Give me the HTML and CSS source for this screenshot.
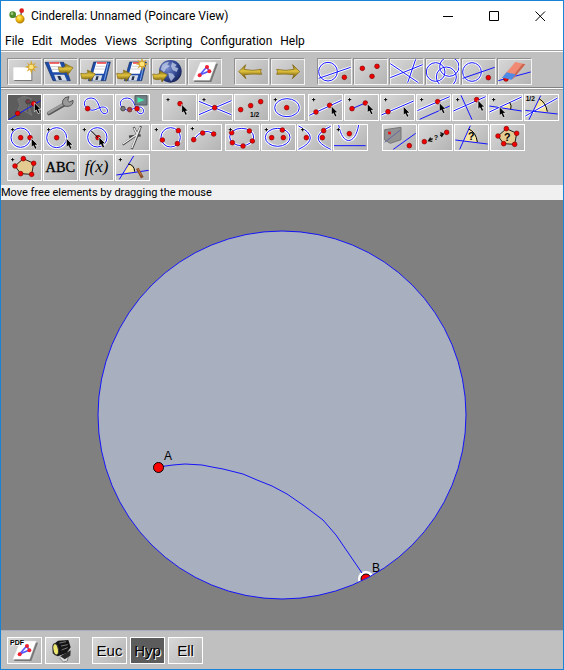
FILE: index.html
```html
<!DOCTYPE html>
<html lang="en">
<head>
<meta charset="utf-8">
<title>Cinderella: Unnamed (Poincare View)</title>
<link rel="stylesheet" href="styles.css">
</head>
<body>
<svg class="defs" aria-hidden="true">
  <defs>
    <radialGradient id="g-gold" cx=".4" cy=".35" r=".7"><stop offset="0" stop-color="#fff27a"/><stop offset=".5" stop-color="#f2bc10"/><stop offset="1" stop-color="#a87400"/></radialGradient>
    <linearGradient id="g-arrow" x1="0" y1="0" x2="0" y2="1"><stop offset="0" stop-color="#7a6410"/><stop offset=".45" stop-color="#e2c440"/><stop offset="1" stop-color="#5a4400"/></linearGradient>
    <radialGradient id="g-earth" cx=".35" cy=".35" r=".75"><stop offset="0" stop-color="#7c8fd0"/><stop offset=".6" stop-color="#2f458f"/><stop offset="1" stop-color="#141d50"/></radialGradient>
    <symbol id="dot" overflow="visible"><circle r="7" fill="#f00000" stroke="#850000" stroke-width="2"/></symbol>
    <symbol id="plus" overflow="visible"><path d="M-5 0H5M0-5V5" stroke="#fff" stroke-width="7"/><path d="M-5 0H5M0-5V5" stroke="#000" stroke-width="3"/></symbol>
    <symbol id="cursor" overflow="visible"><path d="M0 0V27L6 22L11 33L17 30L12 20H20Z" fill="#000" stroke="#f4f4f4" stroke-width="2"/></symbol>
    <symbol id="floppy" overflow="visible">
      <path d="M44 12H94L80 68H28Z" fill="#1c4ba8" stroke="#173063" stroke-width="2"/>
      <path d="M52 13H84L74 47H42Z" fill="#fff"/><path d="M54 15H82" stroke="#e22" stroke-width="4"/><path d="M51 25H79M48 33H77" stroke="#b9bdc8" stroke-width="2"/>
      <path d="M45 52H70L65 68H40Z" fill="#d7dde6"/><path d="M52 55H59L56 66H49Z" fill="#26334e"/><path d="M88 14L76 67" stroke="#7fa4e8" stroke-width="3"/>
    </symbol>
    <symbol id="gold-right" overflow="visible"><path d="M0 10Q12 14 22 8L20 0L44 12L28 34L26 25Q14 29 3 25Z" fill="url(#g-arrow)" stroke="#8a6c10" stroke-width="2"/></symbol>
    <symbol id="spark" overflow="visible"><path d="M0-20L4-7L14-14L8-3L21 0L8 4L14 14L4 8L0 21L-4 8L-14 14L-8 4L-20 0L-8-4L-14-14L-4-7Z" fill="#d5a62c"/><circle r="7" fill="#ffe47a"/></symbol>
    <symbol id="sheet" overflow="visible">
      <path d="M40 14H90L70 69H18Z" fill="#777" transform="translate(3 3)"/><path d="M40 12H88L68 67H17Z" fill="#fff" stroke="#ccc"/>
      <path d="M59 27L38 51L67 39Z" fill="none" stroke="#5557ff" stroke-width="5"/>
      <circle cx="60" cy="27" r="6" fill="#f02030"/><circle cx="38" cy="52" r="6" fill="#f02030"/><circle cx="67" cy="40" r="6" fill="#f02030"/>
    </symbol>
    <symbol id="loop" overflow="visible"><path d="M25 44C10 34 14 12 37 12C64 13 58 56 75 59C90 61 89 40 73 39C56 38 47 57 25 44Z" fill="none" stroke="#fff" stroke-width="7"/><path d="M25 44C10 34 14 12 37 12C64 13 58 56 75 59C90 61 89 40 73 39C56 38 47 57 25 44Z" fill="none" stroke="#1414ff" stroke-width="3"/></symbol>
    <symbol id="pentagon" overflow="visible"><path d="M49 14L80 28L74 61L41 59L24 36Z" fill="#e3cb92" stroke="#222" stroke-width="3"/><use href="#dot" x="49" y="14"/><use href="#dot" x="80" y="28"/><use href="#dot" x="74" y="61"/><use href="#dot" x="41" y="59"/><use href="#dot" x="24" y="36"/></symbol>
    <clipPath id="disk"><circle cx="281" cy="215" r="184"/></clipPath>
  </defs>
</svg>
<div class="window">
  <header class="titlebar">
    <svg class="logo" viewBox="0 0 48 48" aria-hidden="true"><path d="M11 20L34 34L38 8" fill="none" stroke="#777" stroke-width="5"/><circle cx="11" cy="20" r="10" fill="#4c8a2c"/><circle cx="9" cy="17" r="4" fill="#9cc878"/><circle cx="38" cy="8" r="7" fill="#e02020"/><circle cx="33" cy="33" r="13" fill="url(#g-gold)" stroke="#a87800"/></svg>
    <h1>Cinderella: Unnamed (Poincare View)</h1>
    <div class="controls">
      <button aria-label="Minimize"><svg viewBox="0 0 11 11"><path d="M0 5.500H10"/></svg></button>
      <button aria-label="Maximize"><svg viewBox="0 0 11 11"><path d="M.5.5H9.500V9.500H.5Z"/></svg></button>
      <button aria-label="Close"><svg viewBox="0 0 11 11"><path d="M.5.5L10 10M10 .5L.5 10"/></svg></button>
    </div>
  </header>
  <nav class="menu">
    <button>File</button><button>Edit</button><button>Modes</button><button>Views</button><button>Scripting</button><button>Configuration</button><button>Help</button>
  </nav>

  <div class="toolbar files">
    <div class="group">
      <button aria-label="New"><svg viewBox="3 3 99 75"><path d="M22 32H76V69H22Z" fill="#777"/><path d="M19 28H73V66H19Z" fill="#fff"/><use href="#spark" x="73" y="27"/></svg></button>
      <button aria-label="Open"><svg viewBox="3 3 99 75"><path d="M6 13H62L82 68H30Z" fill="#1c4ba8" stroke="#173063" stroke-width="2"/><path d="M17 13H50L62 43H29Z" fill="#fff"/><path d="M19 15H49" stroke="#e22" stroke-width="4"/><path d="M23 26H54M27 34H57" stroke="#aaa" stroke-width="2"/><path d="M33 50H64L72 68H40Z" fill="#d7dde6"/><path d="M43 54H52L57 66H48Z" fill="#26334e"/><use href="#gold-right" x="46" y="17"/></svg></button>
      <button aria-label="Save"><svg viewBox="3 3 99 75"><use href="#floppy"/><use href="#gold-right" x="5" y="36"/></svg></button>
      <button aria-label="Save as"><svg viewBox="3 3 99 75"><use href="#floppy"/><use href="#gold-right" x="5" y="36"/><use href="#spark" x="81" y="18"/></svg></button>
      <button aria-label="Export web page"><svg viewBox="3 3 99 75"><circle cx="58" cy="40" r="34" fill="url(#g-earth)"/><path d="M34 20Q44 10 54 12L49 20L57 24L45 32L39 43L29 34ZM63 13L77 20L72 27L82 31L77 42L65 36L60 25ZM52 44L66 47L72 56L60 70L54 58Z" fill="#cbd5ec" opacity=".7"/><use href="#gold-right" x="5" y="38"/></svg></button>
      <button aria-label="Export sheet"><svg viewBox="3 3 99 75"><use href="#sheet"/></svg></button>
    </div>
    <div class="group wide">
      <button aria-label="Undo"><svg viewBox="3 3 99 75"><path d="M14 41L35 20L31 34Q55 40 82 34L80 41L83 49Q55 47 31 50L36 62Z" fill="url(#g-arrow)" stroke="#806008" stroke-width="2"/></svg></button>
      <button aria-label="Redo"><svg viewBox="3 3 99 75"><path d="M89 41L68 20L72 34Q48 40 20 34L23 41L20 49Q48 47 72 50L67 62Z" fill="url(#g-arrow)" stroke="#806008" stroke-width="2"/></svg></button>
    </div>
    <div class="group wide">
      <button aria-label="Select all"><svg class="geo" viewBox="3 3 99 75"><g class="halo"><circle cx="33" cy="41" r="28"/><path d="M5 61L101 28"/></g><circle cx="33" cy="41" r="28"/><path d="M5 61L101 28"/><use href="#dot" x="82" y="58"/></svg></button>
      <button aria-label="Select points"><svg viewBox="3 3 99 75"><use href="#dot" x="28" y="31"/><use href="#dot" x="72" y="25"/><use href="#dot" x="57" y="55"/></svg></button>
      <button aria-label="Select lines"><svg class="geo" viewBox="3 3 99 75"><g class="halo"><path d="M4 17L88 74M4 59L101 20M56 74L80 4"/></g><path d="M4 17L88 74M4 59L101 20M56 74L80 4"/></svg></button>
      <button aria-label="Select circles"><svg class="geo" viewBox="3 3 99 75"><g class="halo"><circle cx="32" cy="42" r="28"/><circle cx="73" cy="26" r="29"/><circle cx="64" cy="57" r="30"/></g><circle cx="32" cy="42" r="28"/><circle cx="73" cy="26" r="29"/><circle cx="64" cy="57" r="30"/></svg></button>
      <button aria-label="Deselect"><svg class="geo" viewBox="3 3 99 75"><g class="halo"><circle cx="33" cy="42" r="28"/></g><circle cx="33" cy="42" r="28"/><path d="M5 61L101 28"/><use href="#dot" x="82" y="59"/></svg></button>
      <button aria-label="Delete"><svg class="geo" viewBox="3 3 99 75"><path d="M4 68L101 42"/><use href="#dot" x="27" y="63"/><path d="M21 52L55 12L85 19L47 64Z" style="fill:#f08a73;stroke:none"/><path d="M85 19L47 64L48 54L77 17Z" style="fill:#c86852;stroke:none"/><path d="M29 43L56 49L44 65L15 59Z" style="fill:#4f8ae6;stroke:none"/></svg></button>
    </div>
  </div>

  <div class="toolbar modes">
    <div class="row">
      <div class="group">
        <button class="active" aria-label="Move"><svg class="geo" viewBox="3 3 99 75"><path d="M32 15L50 7L73 14L63 32L75 64L46 48L26 60L39 34Z" style="fill:#6c6c6c;stroke:#777"/><path d="M62 15V55" style="stroke:#555"/><path d="M5 77L101 20"/><circle cx="63" cy="23" r="7" style="fill:#753a42;stroke:#444"/><use href="#dot" x="32" y="58"/><use href="#dot" x="80" y="29"/><use href="#cursor" x="82" y="26"/></svg></button>
        <button aria-label="Inspect"><svg viewBox="3 3 99 75"><path d="M18 58L65 31" stroke="#555" stroke-width="12" stroke-linecap="round"/><path d="M17 56L63 29" stroke="#999" stroke-width="8" stroke-linecap="round"/><path d="M59 20Q64 8 78 8L74 19L80 24L90 19Q92 34 76 37Q65 39 59 31Z" fill="#999" stroke="#555" stroke-width="3"/></svg></button>
        <button aria-label="Animate"><svg viewBox="3 3 99 75"><use href="#loop"/><use href="#dot" x="26" y="44"/></svg></button>
        <button aria-label="Record animation"><svg viewBox="3 3 99 75"><use href="#loop"/><path d="M60 5H96V33H60Z" fill="#708087" stroke="#4e5c61" stroke-width="3"/><path d="M67 10L89 18L68 26Z" fill="#3ef0ad"/><circle cx="24" cy="44" r="7" fill="#777" stroke="#333" stroke-width="2"/><circle cx="44" cy="47" r="7" fill="#aa3b3b" stroke="#622" stroke-width="2"/><use href="#dot" x="66" y="44"/></svg></button>
      </div>
      <div class="group wide">
        <button aria-label="Point"><svg viewBox="3 3 99 75"><use href="#plus" x="18" y="17"/><use href="#dot" x="54" y="29"/><use href="#cursor" x="59" y="31"/></svg></button>
        <button aria-label="Intersection"><svg class="geo" viewBox="3 3 99 75"><g class="halo"><path d="M3 22L100 62M3 62L100 20"/></g><path d="M3 22L100 62M3 62L100 20"/><use href="#plus" x="18" y="17"/><use href="#dot" x="50" y="41"/></svg></button>
        <button aria-label="Midpoint"><svg viewBox="3 3 99 75"><use href="#dot" x="20" y="47"/><use href="#dot" x="50" y="35"/><use href="#dot" x="80" y="23"/><text x="48" y="68" class="small">1/2</text></svg></button>
        <button aria-label="Center"><svg class="geo" viewBox="3 3 99 75"><g class="halo"><ellipse cx="51" cy="41" rx="37" ry="27"/></g><ellipse cx="51" cy="41" rx="37" ry="27"/><use href="#plus" x="16" y="17"/><use href="#dot" x="50" y="41"/></svg></button>
      </div>
      <div class="group near">
        <button aria-label="Line through two points"><svg class="geo" viewBox="3 3 99 75"><g class="halo"><path d="M4 64L101 19"/></g><path d="M4 64L101 19"/><use href="#plus" x="17" y="17"/><use href="#dot" x="24" y="54"/><use href="#dot" x="65" y="34"/><use href="#cursor" x="70" y="36"/></svg></button>
        <button aria-label="Segment"><svg class="geo" viewBox="3 3 99 75"><path d="M24 44L64 27"/><use href="#plus" x="17" y="17"/><use href="#dot" x="24" y="44"/><use href="#dot" x="64" y="27"/><use href="#cursor" x="70" y="29"/></svg></button>
        <button aria-label="Line through a point"><svg class="geo" viewBox="3 3 99 75"><g class="halo"><path d="M4 63L101 21"/></g><path d="M4 63L101 21"/><use href="#plus" x="17" y="17"/><use href="#dot" x="24" y="53"/><use href="#cursor" x="70" y="37"/></svg></button>
        <button aria-label="Parallel"><svg class="geo" viewBox="3 3 99 75"><g class="halo"><path d="M4 50L101 8"/></g><path d="M4 50L101 8M11 76L101 36"/><use href="#plus" x="17" y="17"/><use href="#dot" x="65" y="23"/><use href="#cursor" x="70" y="26"/></svg></button>
        <button aria-label="Perpendicular"><svg class="geo" viewBox="3 3 99 75"><g class="halo"><path d="M4 51L101 8"/></g><path d="M4 51L101 8M27 4L60 77"/><use href="#plus" x="17" y="17"/><use href="#dot" x="74" y="17"/><use href="#cursor" x="78" y="19"/></svg></button>
        <button aria-label="Line with fixed angle"><svg class="geo" viewBox="3 3 99 75"><path d="M33 40L67 25Q72 35 69 46Z" style="fill:#f5e4a2;stroke:none"/><g class="halo"><path d="M4 54L101 9"/></g><path d="M4 54L101 9M4 36L101 51"/><path d="M65 25Q72 35 68 46" class="black"/><use href="#plus" x="17" y="17"/><use href="#cursor" x="34" y="38"/></svg></button>
        <button aria-label="Angle bisector"><svg class="geo" viewBox="3 3 99 75"><path d="M29 50L47 12Q65 22 70 54Z" style="fill:#f5e4a2;stroke:none"/><g class="halo"><path d="M4 66L101 12"/></g><path d="M15 77L50 5M4 49L101 60M4 66L101 12"/><path d="M45 14Q65 25 70 53" class="black"/><text x="5" y="20" class="small">1/2</text></svg></button>
      </div>
    </div>
    <div class="row">
      <div class="group">
        <button aria-label="Circle"><svg class="geo" viewBox="3 3 99 75"><g class="halo"><circle cx="41" cy="41" r="29"/></g><circle cx="41" cy="41" r="29"/><use href="#plus" x="17" y="17"/><use href="#dot" x="41" y="41"/><use href="#dot" x="69" y="41"/><use href="#cursor" x="73" y="43"/></svg></button>
        <button aria-label="Circle by radius"><svg class="geo" viewBox="3 3 99 75"><g class="halo"><circle cx="41" cy="41" r="30"/></g><circle cx="41" cy="41" r="30"/><use href="#plus" x="17" y="17"/><use href="#dot" x="41" y="41"/><use href="#cursor" x="70" y="43"/></svg></button>
        <button aria-label="Circle with fixed radius"><svg class="geo" viewBox="3 3 99 75"><g class="halo"><circle cx="55" cy="40" r="29"/></g><circle cx="55" cy="40" r="29"/><use href="#plus" x="16" y="17"/><use href="#dot" x="57" y="41"/><path class="black" d="M36 20L58 42"/><use href="#cursor" x="60" y="39"/></svg></button>
        <button aria-label="Compass"><svg viewBox="3 3 99 75"><path d="M78 7L65 32L23 62M74 18L50 75M56 10L65 28M42 38L77 34" fill="none" stroke="#444" stroke-width="7"/><path d="M76 9L65 32L23 60M72 18L50 73M57 12L65 28" fill="none" stroke="#ededed" stroke-width="4"/></svg></button>
        <button aria-label="Circle through three points"><svg class="geo" viewBox="3 3 99 75"><g class="halo"><circle cx="59" cy="40" r="29"/></g><circle cx="59" cy="40" r="29"/><use href="#plus" x="16" y="17"/><use href="#dot" x="82" y="20"/><use href="#dot" x="34" y="48"/><use href="#dot" x="79" y="59"/></svg></button>
        <button aria-label="Arc"><svg class="geo" viewBox="3 3 99 75"><g class="halo"><path d="M20 47Q46 9 80 29"/></g><path d="M20 47Q46 9 80 29"/><use href="#plus" x="16" y="14"/><use href="#dot" x="20" y="47"/><use href="#dot" x="47" y="27"/><use href="#dot" x="80" y="30"/></svg></button>
      </div>
      <div class="group near">
        <button aria-label="Conic by five points"><svg class="geo" viewBox="3 3 99 75"><g class="halo"><ellipse cx="50" cy="39" rx="36" ry="26"/></g><ellipse cx="50" cy="39" rx="36" ry="26"/><use href="#dot" x="20" y="26"/><use href="#plus" x="16" y="17"/><use href="#dot" x="73" y="21"/><use href="#dot" x="82" y="51"/><use href="#dot" x="54" y="66"/><use href="#dot" x="22" y="56"/></svg></button>
        <button aria-label="Ellipse"><svg class="geo" viewBox="3 3 99 75"><g class="halo"><ellipse cx="50" cy="40" rx="37" ry="27"/></g><ellipse cx="50" cy="40" rx="37" ry="27"/><use href="#plus" x="16" y="17"/><use href="#dot" x="64" y="18"/><use href="#dot" x="32" y="41"/><use href="#dot" x="67" y="41"/></svg></button>
        <button aria-label="Hyperbola"><svg class="geo" viewBox="3 3 99 75"><g class="halo"><path d="M5 6Q75 42 5 76M101 7Q26 42 101 76"/></g><path d="M5 6Q75 42 5 76M101 7Q26 42 101 76"/><use href="#plus" x="17" y="17"/><use href="#dot" x="28" y="41"/><use href="#dot" x="80" y="20"/><use href="#dot" x="76" y="41"/></svg></button>
        <button aria-label="Parabola"><svg class="geo" viewBox="3 3 99 75"><g class="halo"><path d="M17 3C28 65 66 65 77 3"/></g><path d="M17 3C28 65 66 65 77 3M3 65H98"/><use href="#plus" x="16" y="17"/><use href="#dot" x="49" y="29"/></svg></button>
      </div>
      <div class="group far">
        <button aria-label="Polar"><svg class="geo" viewBox="3 3 99 75"><path d="M8 17L57 10V47L25 58L8 48Z" style="fill:#929292;stroke:#777"/><path d="M8 55L55 18" style="stroke:#6267a0"/><path d="M34 76L101 28"/><path d="M18 23H27V31H18Z" style="fill:#e51b1b;stroke:none"/><use href="#dot" x="82" y="65"/></svg></button>
        <button aria-label="Distance"><svg viewBox="3 3 99 75"><path d="M32 50L44 44M66 34L76 30M38 41L32 50L43 52M67 26L76 30L70 39" fill="none" stroke="#111" stroke-width="4"/><use href="#dot" x="19" y="53"/><use href="#dot" x="86" y="25"/><text x="48" y="47" class="small">?</text></svg></button>
        <button aria-label="Measure angle"><svg class="geo" viewBox="3 3 99 75"><path d="M28 51L45 13Q66 20 70 55Z" style="fill:#f5e4a2;stroke:none"/><path d="M17 76L49 5M4 48L101 60"/><path d="M44 15Q66 24 70 54" class="black"/><text x="42" y="48" class="query">?</text></svg></button>
        <button aria-label="Measure area"><svg viewBox="3 3 99 75"><use href="#pentagon"/><text x="42" y="50" class="query">?</text></svg></button>
      </div>
    </div>
    <div class="row">
      <div class="group">
        <button aria-label="Polygon"><svg viewBox="3 3 99 75"><use href="#pentagon"/><use href="#plus" x="17" y="17"/></svg></button>
        <button aria-label="Text"><svg viewBox="3 3 99 75"><text x="52" y="53" class="abc">ABC</text></svg></button>
        <button aria-label="Function"><svg viewBox="3 3 99 75"><text x="53" y="54" class="fx">f(x)</text></svg></button>
        <button aria-label="Angle mark"><svg class="geo" viewBox="3 3 99 75"><path d="M26 56L40 30Q58 32 59 53Z" style="fill:#f5e4a2;stroke:none"/><path d="M4 63L101 49M13 76L56 6"/><path d="M39 30Q58 32 59 53" class="black"/><path d="M67 43L82 71" style="stroke:#8b4b26;stroke-width:9"/><path d="M67 42L79 64" style="stroke:#bf7a45"/><use href="#plus" x="16" y="17"/></svg></button>
      </div>
    </div>
  </div>

  <p class="status">Move free elements by dragging the mouse</p>

  <main class="view">
    <svg viewBox="0 0 562 430" role="img" aria-label="Poincare disk with segment AB">
      <circle cx="281" cy="215" r="184" fill="#a8afbf"/>
      <g clip-path="url(#disk)">
        <circle cx="365" cy="379" r="8" fill="#fff"/>
        <circle cx="365" cy="379" r="5" fill="#f00" stroke="#000"/>
      </g>
      <path d="M157 267L172 265L184 264L201 265L211 267L222 269L242 274L256 280L271 286L286 294L302 305L322 320L335 335L361 373" fill="none" stroke="#1414f8"/>
      <circle cx="281" cy="215" r="184" fill="none" stroke="#1414f8"/>
      <circle cx="157.500" cy="267.500" r="5" fill="#f00" stroke="#000"/>
      <text x="163" y="260">A</text>
      <text x="371" y="372">B</text>
    </svg>
  </main>

  <footer class="viewbar">
    <div class="group">
      <button aria-label="Export PDF"><svg viewBox="3 3 99 75"><use href="#sheet"/><text x="9" y="25" class="pdf">PDF</text></svg></button>
      <button aria-label="Render"><svg viewBox="3 3 99 75"><path d="M43 62L55 75L67 72L70 59" fill="#ddd" stroke="#888" stroke-width="3"/><path d="M24 23L39 11L70 9L77 31L65 48L38 58L23 49Z" fill="#151515"/><path d="M46 58L77 40L76 56L59 67Z" fill="#292929"/><path d="M43 18L63 14M48 27L68 23M50 39L68 32" stroke="#777" stroke-width="3"/><ellipse cx="32" cy="37" rx="8" ry="17" transform="rotate(-10 32 37)" fill="#ece66e" stroke="#333" stroke-width="3"/></svg></button>
    </div>
    <div class="group">
      <button>Euc</button>
      <button class="active">Hyp</button>
      <button>Ell</button>
    </div>
  </footer>
</div>
</body>
</html>
```
FILE: styles.css
```css
* { box-sizing: border-box; }
body { margin: 0; font-family: Roboto, sans-serif; font-size: 12px; color: #000; }
button { font: inherit; color: inherit; padding: 0; border: 0; background: none; }
.defs { position: absolute; width: 0; height: 0; }

.window { display: flex; flex-direction: column; min-height: 100vh; border: 1px solid #1883d7; background: #c0c0c0; }

.titlebar { display: flex; align-items: center; height: 30px; padding-left: 8px; background: #fff; }
.logo { width: 16px; height: 16px; }
.titlebar h1 { flex: 1; margin: 0 0 0 6px; font-size: 12px; font-weight: 400; white-space: nowrap; }
.controls { display: flex; }
.controls button { display: grid; place-items: center; width: 46px; height: 28px; }
.controls svg { width: 11px; height: 11px; fill: none; stroke: #000; }

.menu { display: flex; gap: 8px; height: 20px; padding-left: 4px; background: #fff; border-bottom: 1px solid #a0a0a0; }
.menu button { line-height: 18px; }

.toolbar { padding: 5px 0 3px 6px; border-top: 1px solid #fff; }
.files { display: flex; padding-top: 6px; padding-bottom: 2px; border-bottom: 1px solid #808080; }
.modes { display: flex; flex-direction: column; gap: 3px; padding: 4px 0 4px 6px; margin-top: 1px; box-shadow: 0 -1px #fff; border-top-color: #a0a0a0; }
.row, .group { display: flex; }
.group { gap: 1px; }
.wide { margin-left: 12px; }
.near { margin-left: 3px; }
.far { margin-left: 14px; }

.group button { width: 35px; height: 27px; flex: none; border: 1px solid #fff; background: linear-gradient(135deg, #d8d8d8, #b4b4b4); }
.files .group button { border-color: #909090 #f4f4f4 #f4f4f4 #909090; box-shadow: inset 1px 1px #eee; }
.group button.active { background: #5c5c5c; }
.group svg { display: block; width: 33px; height: 25px; }

.geo circle, .geo ellipse, .geo path { fill: none; stroke: #1414ff; stroke-width: 3; }
.geo .halo * { stroke: #fff; stroke-width: 8; }
.geo .black { stroke: #000; }
.small { font: bold 20px "Liberation Sans", sans-serif; }
.query { font: bold 32px "Liberation Sans", sans-serif; }
.abc { font: 43px "Liberation Serif", serif; text-anchor: middle; stroke: #000; }
.fx { font: italic 51px "Liberation Serif", serif; text-anchor: middle; }
.pdf { font: bold 21px "Liberation Sans", sans-serif; }

.status { margin: 0; height: 15px; line-height: 15px; font-size: 11px; background: #f0f0f0; }

.view { flex: 1; display: grid; place-items: center; background: #808080; }
.view svg { display: block; width: 100%; }
.view text { font: 12px "Liberation Sans", sans-serif; }

.viewbar { display: flex; gap: 12px; padding: 6px 6px 5px; border-top: 1px solid #a8afbf; }
.viewbar .group { gap: 3px; }
.viewbar .group button { font: 15px "Liberation Sans", sans-serif; line-height: 25px; text-shadow: 1px 1px #fff; }
```
